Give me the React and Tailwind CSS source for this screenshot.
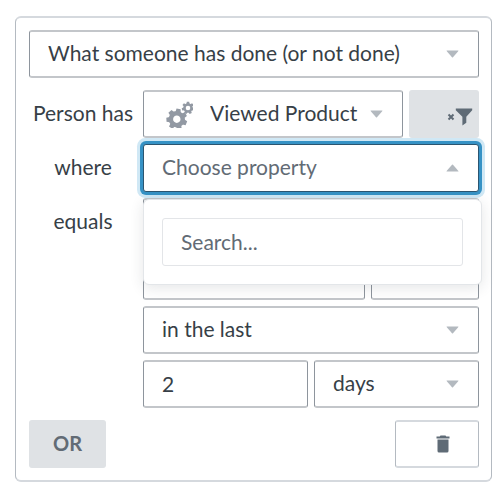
import React, { useState } from 'react';
import clsx from 'clsx';

const fieldStyles =
  'block h-12 w-full appearance-none rounded-[3px] border-x border-y-2 border-x-[#8e959d] border-y-[#c3c6ca] bg-white pb-0.5 text-left text-[#373f47] outline-none';

const Caret = ({ up }) => (
  <svg
    viewBox="0 0 13 8"
    aria-hidden="true"
    className={clsx('pointer-events-none absolute top-5 right-5 h-2 w-[13px] fill-[#b3b9bf]', up && 'rotate-180')}
  >
    <path d="M1 .5h11q.8 0 .4.6L7 7.2q-.5.5-1 0L.6 1.1Q.2.5 1 .5Z" />
  </svg>
);

const SelectField = ({ label, options, className, children }) => (
  <div className="relative min-w-0 flex-1">
    <select aria-label={label} className={clsx(fieldStyles, className || 'px-[18px]')}>
      {options.map((option) => (
        <option key={option}>{option}</option>
      ))}
    </select>
    {children}
    <Caret />
  </div>
);

const Gear = ({ cx, cy, body, hole, reach, tooth, angles }) => (
  <g transform={`translate(${cx} ${cy})`}>
    <circle r={(body + hole) / 2} fill="none" stroke="#9299a3" strokeWidth={body - hole} />
    {angles.map((angle) => (
      <path
        key={angle}
        transform={`rotate(${angle})`}
        d={`M${-tooth} ${-body + 1}L${-tooth * 0.8} ${-reach}H${tooth * 0.8}L${tooth} ${-body + 1}Z`}
        fill="#9299a3"
      />
    ))}
  </g>
);

const GearsIcon = () => (
  <svg viewBox="0 0 28 28" aria-hidden="true" className="pointer-events-none absolute top-2.5 left-[22px] size-7">
    <Gear cx={11.8} cy={19.2} body={8.2} hole={3.7} reach={10.4} tooth={2.6} angles={[10, 61, 113, 164, 216, 267, 319]} />
    <Gear cx={23} cy={8} body={4.7} hole={2.3} reach={6.2} tooth={1.5} angles={[0, 51, 103, 154, 206, 257, 309]} />
  </svg>
);

const FilterIcon = () => (
  <svg viewBox="0 0 26 18" aria-hidden="true" className="h-[18px] w-[26px]">
    <path d="M1.5 6.5 6.5 11.5M6.5 6.5l-5 5" stroke="#5f6b76" strokeWidth="2" />
    <path d="M8.8.5h16.4v1.8l-5.9 6.5v6L15.4 17.5V8.8L8.8 2.3Z" fill="#5f6b76" />
  </svg>
);

const TrashIcon = () => (
  <svg viewBox="0 0 14 18" aria-hidden="true" className="h-[18px] w-3.5 fill-[#5f6b76]">
    <path d="M4.5.5h5l.8 1H13.5v2H.5v-2h3.2ZM1.5 4.5h11V16q0 1.5-1.5 1.5H3Q1.5 17.5 1.5 16Z" />
  </svg>
);

const App = () => {
  const [open, setOpen] = useState(true);

  return (
    <main className="bg-white pt-4 pr-1.5 pb-5 pl-[15px] font-['Lato','Liberation_Sans',sans-serif] text-[21px] leading-6 text-[#373f47]">
      <section className="flex flex-col gap-3 rounded-md border-x border-y-2 border-x-[#b4bac1] border-y-[#d5d9de] py-3 pr-3 pl-[13px]">
        <SelectField
          label="Condition"
          options={['What someone has done (or not done)', 'Properties about someone']}
        />

        <div className="grid grid-cols-[108px_minmax(0,1fr)] items-center gap-1.5">
          <span className="pb-0.5 text-center whitespace-nowrap">Person has</span>
          <div className="flex gap-1.5">
            <SelectField label="Metric" options={['Viewed Product', 'Placed Order']} className="pr-10 pl-[66px]">
              <GearsIcon />
            </SelectField>
            <button
              type="button"
              aria-label="Remove filter"
              className="flex h-12 w-[70px] items-center justify-end rounded-[3px] bg-[#dfe2e5] pt-1.5 pr-1.5"
            >
              <FilterIcon />
            </button>
          </div>

          {/* Property picker */}
          <span className="pb-0.5 text-center">where</span>
          <div className="relative">
            <button
              type="button"
              aria-haspopup="listbox"
              aria-expanded={open}
              onClick={() => setOpen(!open)}
              className="block h-12 w-full rounded-[3px] border border-[#2b5570] bg-white px-[18px] pb-0.5 text-left text-[#626b75] shadow-[0_0_0_3px_#3692c5,0_0_0_6px_#d0e8f5] outline-none"
            >
              Choose property
            </button>
            <Caret up />
            {open && (
              <div className="absolute top-full -right-[3px] left-0 z-10 mt-[7px] rounded-md border border-[#e3e6e9] bg-white p-[18px] shadow-[0_3px_14px_rgba(40,50,60,0.12)]">
                <input
                  type="text"
                  aria-label="Search properties"
                  placeholder="Search..."
                  className="block h-12 w-full rounded-[3px] border border-[#e3e5e8] bg-white px-[18px] pb-0.5 outline-none placeholder:text-[#626b75]"
                />
              </div>
            )}
          </div>

          <span className="pb-0.5 text-center">equals</span>
          <input type="text" aria-label="Property value" className={clsx(fieldStyles, 'px-[18px]')} />

          <div className="col-start-2 flex gap-1.5">
            <SelectField label="Frequency" options={['']} />
            <input type="text" aria-label="Count" className={clsx(fieldStyles, 'max-w-[108px] px-[18px]')} />
          </div>

          <div className="col-start-2">
            <SelectField label="Timeframe" options={['in the last', 'over all time']} />
          </div>

          <div className="col-start-2 grid grid-cols-2 gap-1.5">
            <input type="text" aria-label="Amount" defaultValue="2" className={clsx(fieldStyles, 'px-[18px]')} />
            <SelectField label="Unit" options={['days', 'weeks']} />
          </div>
        </div>

        <div className="flex justify-between">
          <button type="button" className="h-12 w-[77px] rounded-[3px] bg-[#dfe2e5] pb-0.5 text-xl font-bold text-[#626b75]">
            OR
          </button>
          <button
            type="button"
            aria-label="Delete condition"
            className="flex h-12 w-[84px] items-center justify-center rounded-[3px] border-x border-y-2 border-x-[#b4bac1] border-y-[#d5d9de] bg-white pl-3"
          >
            <TrashIcon />
          </button>
        </div>
      </section>
    </main>
  );
};

export default App;
